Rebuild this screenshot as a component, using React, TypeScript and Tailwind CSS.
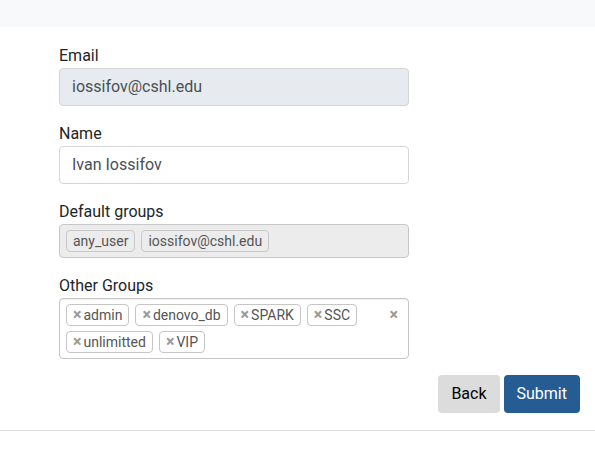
import { useState, type FormEvent } from "react";

const initialGroups = ["admin", "denovo_db", "SPARK", "SSC", "unlimitted", "VIP"];
const defaultGroups = ["any_user", "iossifov@cshl.edu"];

const chip =
  "flex h-[22px] items-center rounded border px-1.5 text-sm leading-5 text-[#555555]";
const field =
  "block h-[38px] w-full rounded border border-[#d4d6d8] px-3 pb-0.5 text-base leading-6 text-[#495057] outline-none";

export default function App() {
  const [name, setName] = useState("Ivan Iossifov");
  const [groups, setGroups] = useState(initialGroups);

  const submit = (event: FormEvent) => event.preventDefault();

  return (
    <div className="bg-white font-[Roboto,sans-serif] text-base leading-6 text-[#212529]">
      <header className="h-[27px] bg-[#f8f9fa]" />
      <main className="border-b border-[#dcdcdc] pt-[17px] pb-[17px]">
        <form onSubmit={submit} className="flex flex-col gap-4">
          <div className="ml-[59px] flex w-[350px] flex-col gap-4">
            <div>
              <label htmlFor="email" className="block">
                Email
              </label>
              <input
                id="email"
                type="email"
                disabled
                value="iossifov@cshl.edu"
                className={`${field} bg-[#e7ebef]`}
              />
            </div>

            <div>
              <label htmlFor="name" className="block">
                Name
              </label>
              <input
                id="name"
                type="text"
                value={name}
                onChange={(event) => setName(event.target.value)}
                className={`${field} bg-white`}
              />
            </div>

            <div>
              <span id="default-groups" className="block">
                Default groups
              </span>
              <ul
                aria-labelledby="default-groups"
                className="flex flex-wrap gap-x-1.5 gap-y-[5px] rounded border border-[#c8c8c8] bg-[#ececec] px-1.5 py-[5px]"
              >
                {defaultGroups.map((group) => (
                  <li key={group} className={`${chip} border-[#c8c8c8]`}>
                    {group}
                  </li>
                ))}
              </ul>
            </div>

            <div>
              <span id="other-groups" className="block">
                Other Groups
              </span>
              <div className="flex items-start rounded border border-[#c6c6c6] bg-white py-[5px] pr-2.5 pl-1.5 shadow-[inset_0_1px_1px_rgba(0,0,0,0.06)]">
                <ul
                  aria-labelledby="other-groups"
                  className="flex flex-1 flex-wrap gap-x-1.5 gap-y-[5px]"
                >
                  {groups.map((group) => (
                    <li key={group} className={`${chip} gap-0.5 border-[#c6c6c6]`}>
                      <button
                        type="button"
                        aria-label={`Remove ${group}`}
                        onClick={() => setGroups(groups.filter((item) => item !== group))}
                        className="text-base leading-5 font-bold text-[#999999]"
                      >
                        ×
                      </button>
                      {group}
                    </li>
                  ))}
                </ul>
                <button
                  type="button"
                  aria-label="Clear all groups"
                  onClick={() => setGroups([])}
                  className="h-[22px] text-base leading-5 font-bold text-[#999999]"
                >
                  ×
                </button>
              </div>
            </div>
          </div>

          <div className="mr-[15px] flex justify-end gap-1">
            <button
              type="button"
              className="h-[38px] rounded bg-[#dcdcdc] px-[13px] text-black"
            >
              Back
            </button>
            <button
              type="submit"
              className="h-[38px] rounded bg-[#255c93] px-[13px] text-white"
            >
              Submit
            </button>
          </div>
        </form>
      </main>
    </div>
  );
}
